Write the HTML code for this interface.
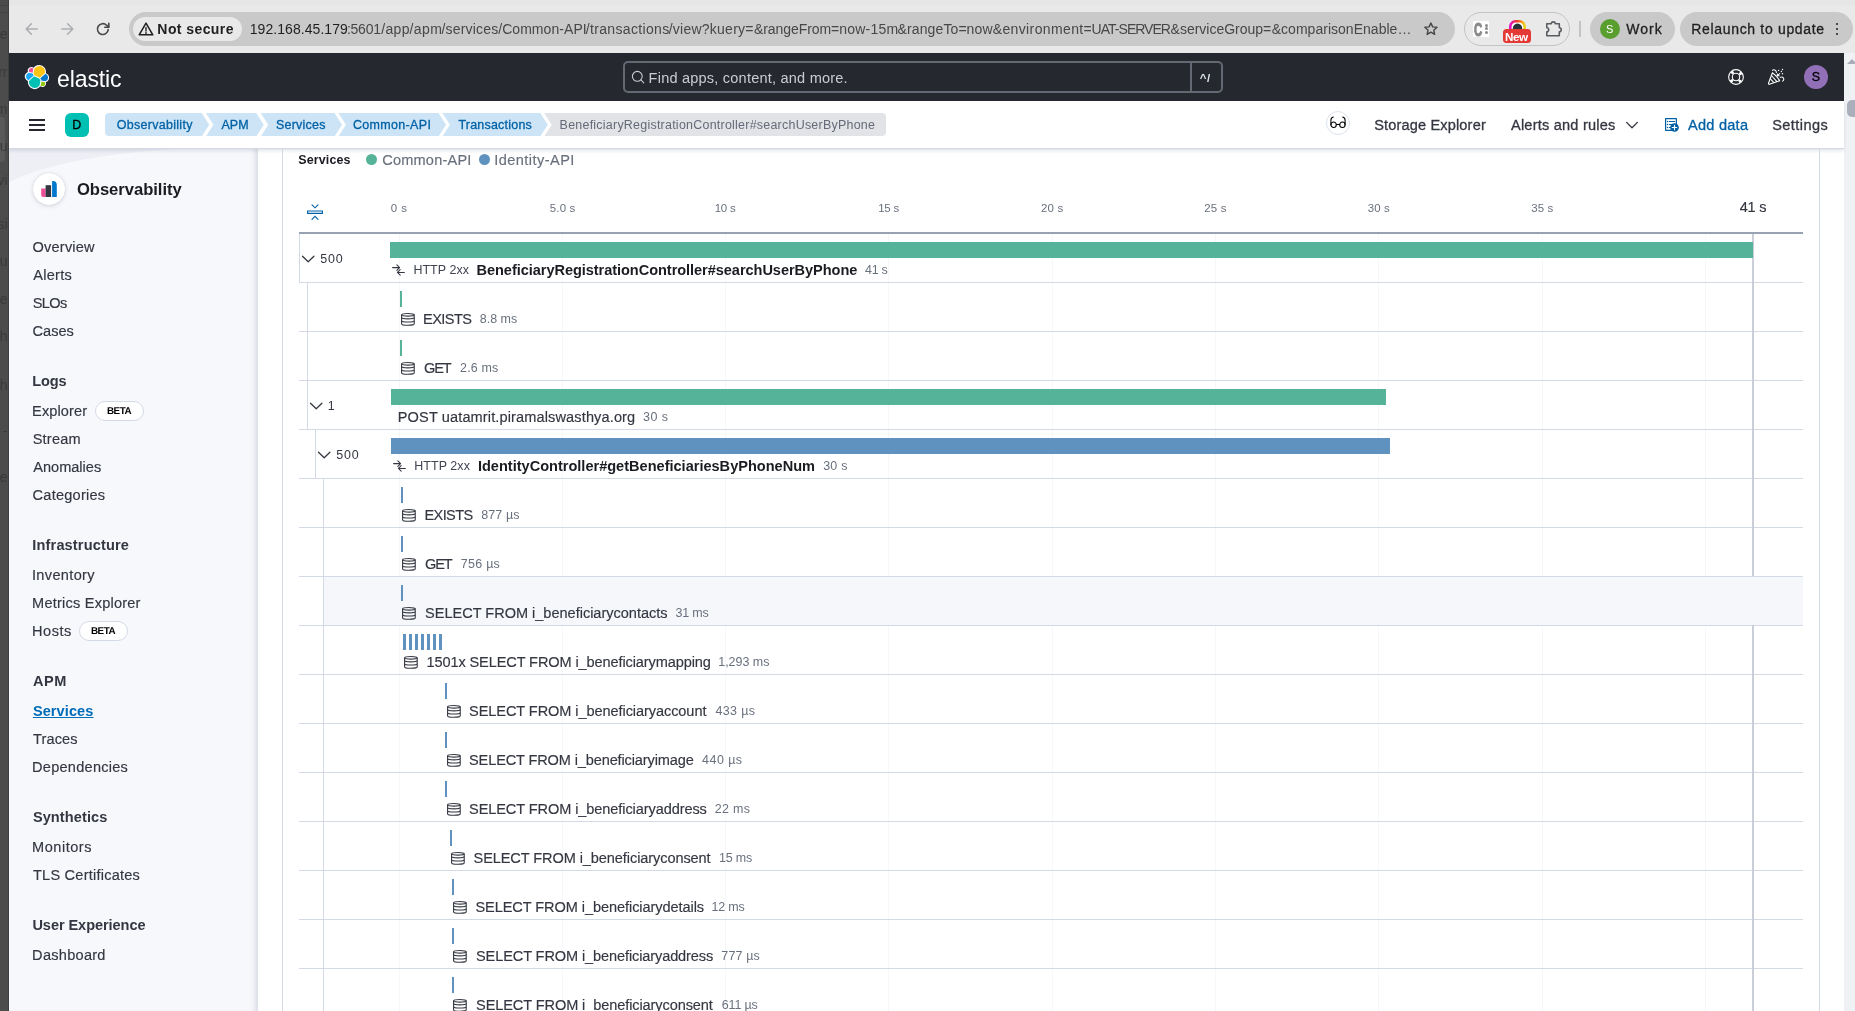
<!DOCTYPE html>
<html lang="en">
<head>
<meta charset="utf-8">
<title>BeneficiaryRegistrationController#searchUserByPhone - Transactions - Common-API - Services - APM - Observability - Elastic</title>
<style>
html,body{margin:0;padding:0;}
body{width:1855px;height:1011px;overflow:hidden;position:relative;background:#fff;font-family:"Liberation Sans", sans-serif;}
#app{position:absolute;left:0;top:0;width:1855px;height:1011px;overflow:hidden;will-change:transform;}
#app div,#app span,#app svg,#app a{position:absolute;white-space:nowrap;box-sizing:border-box;}
#app span{display:block;}
#app svg{overflow:visible;}

.u{text-decoration:underline;text-decoration-thickness:1px;text-underline-offset:1px;}
.crumb{height:23.4px;top:113px;background:#CCE4F5;}
.hl{background:#D3DAE6;height:1px;left:299px;width:1504px;}
.vl{background:#D3DAE6;width:1px;}
.gl{background:#F6F7FA;width:1px;top:234px;height:777px;}
.beta{height:20px;border:1px solid #D3DAE6;border-radius:10px;background:#fff;}

</style>
</head>
<body>
<div id="app">
<div style="left:0px;top:0px;width:1855px;height:53px;background:#E9E9E9;"></div>
<div style="left:0px;top:0px;width:1855px;height:5px;background:#E6E6E6;"></div>
<div style="left:129px;top:12px;width:1326px;height:34px;background:#C9C9C9;border-radius:17px;"></div>
<div style="left:133px;top:17px;width:109px;height:24px;background:#E9E9E9;border-radius:12px;"></div>
<svg style="left:24px;top:21px" width="16" height="16" viewBox="0 0 16 16" fill="none" stroke="#ADAEB1" stroke-width="1.6" stroke-linecap="round" stroke-linejoin="round"><path d="M13.2 8H2.4M7.4 2.8 2.2 8l5.2 5.2"/></svg>
<svg style="left:59px;top:21px" width="16" height="16" viewBox="0 0 16 16" fill="none" stroke="#ADAEB1" stroke-width="1.6" stroke-linecap="round" stroke-linejoin="round"><path d="M2.8 8h10.8M8.6 2.8 13.8 8l-5.2 5.2"/></svg>
<svg style="left:95px;top:21px" width="16" height="16" viewBox="0 0 16 16" fill="none" stroke="#474747" stroke-width="1.6" stroke-linecap="round" stroke-linejoin="round"><path d="M13.2 8.6A5.4 5.4 0 1 1 11.6 4.2L13.6 6"/><path d="M13.8 2.2V6.2H9.8" /></svg>
<svg style="left:138px;top:22px" width="16" height="14" viewBox="0 0 16 14" fill="none" stroke="#1F1F1F" stroke-width="1.5" stroke-linejoin="round"><path d="M8 1.2 14.8 12.8H1.2Z"/><path d="M8 5.4v3.6M8 10.4v1" stroke-linecap="round" stroke-width="1.3"/></svg>
<span style="left:157.36px;top:22.02px;font-size:14px;line-height:14px;color:#1F1F1F;font-weight:700;letter-spacing:0.417px;">Not secure</span>
<span style="left:249.73px;top:22.02px;font-size:14px;line-height:14px;color:#1F1F1F;letter-spacing:0.063px;">192.168.45.179</span>
<span style="left:346.92px;top:22.02px;font-size:14px;line-height:14px;color:#474747;letter-spacing:-0.243px;">:5601</span>
<span style="left:381.2px;top:22.02px;font-size:14px;line-height:14px;color:#474747;letter-spacing:0.347px;">/app</span>
<span style="left:409.4px;top:22.02px;font-size:14px;line-height:14px;color:#474747;letter-spacing:0.433px;">/apm</span>
<span style="left:441.4px;top:22.02px;font-size:14px;line-height:14px;color:#474747;letter-spacing:0.196px;">/services</span>
<span style="left:498.2px;top:22.02px;font-size:14px;line-height:14px;color:#474747;letter-spacing:0.058px;">/Common-API</span>
<span style="left:585.7px;top:22.02px;font-size:14px;line-height:14px;color:#474747;letter-spacing:0.344px;">/transactions</span>
<span style="left:668.7px;top:22.02px;font-size:14px;line-height:14px;color:#474747;letter-spacing:0.245px;">/view?kuery=</span>
<span style="left:754.01px;top:22.02px;font-size:14px;line-height:14px;color:#474747;letter-spacing:-0.07px;">&amp;rangeFrom=</span>
<span style="left:839.27px;top:22.02px;font-size:14px;line-height:14px;color:#474747;letter-spacing:0.212px;">now-15m</span>
<span style="left:897.51px;top:22.02px;font-size:14px;line-height:14px;color:#474747;letter-spacing:0.122px;">&amp;rangeTo=</span>
<span style="left:966.57px;top:22.02px;font-size:14px;line-height:14px;color:#474747;letter-spacing:0.156px;">now</span>
<span style="left:992.71px;top:22.02px;font-size:14px;line-height:14px;color:#474747;letter-spacing:0.377px;">&amp;environment=</span>
<span style="left:1091.62px;top:22.02px;font-size:14px;line-height:14px;color:#474747;letter-spacing:-0.982px;">UAT-SERVER</span>
<span style="left:1170.61px;top:22.02px;font-size:14px;line-height:14px;color:#474747;letter-spacing:-0.007px;">&amp;serviceGroup=</span>
<span style="left:1271.71px;top:22.02px;font-size:14px;line-height:14px;color:#474747;letter-spacing:0.023px;">&amp;comparisonEnable…</span>
<svg style="left:1423.200px;top:21.400px" width="15.800" height="15.800" viewBox="0 0 18 18" fill="none" stroke="#474747" stroke-width="1.650" stroke-linejoin="round"><path d="M9 2.2l2.05 4.5 4.85.5-3.65 3.25 1.05 4.8L9 12.75l-4.3 2.5 1.05-4.8L2.1 7.2l4.85-.5z"/></svg>
<div style="left:1464px;top:12px;width:106px;height:34px;background:transparent;border:1px solid #C3C3C3;border-radius:17px;"></div>
<div style="left:1473px;top:21px;width:16px;height:15.7px;background:#FFFFFF;"></div>
<span style="left:1473.93px;top:20.02px;font-size:19px;line-height:19px;color:#8A8A8A;font-weight:700;transform:scaleX(0.6);transform-origin:0 0;-webkit-text-stroke:1.1px #8A8A8A;">C</span>
<div style="left:1484.6px;top:23.7px;width:3px;height:3px;background:#8A8A8A;border-radius:2px;"></div>
<div style="left:1484.6px;top:27.2px;width:3px;height:3px;background:#8A8A8A;border-radius:2px;"></div>
<div style="left:1484.6px;top:30.7px;width:3px;height:3px;background:#8A8A8A;border-radius:2px;"></div>
<svg style="left:1508.500px;top:20.400px" width="17" height="9" viewBox="0 0 17 9"><defs><linearGradient id="rb" x1="0" y1="0" x2="1" y2="0"><stop offset="0" stop-color="#E411C7"/><stop offset=".45" stop-color="#F0342C"/><stop offset=".8" stop-color="#F59A12"/><stop offset="1" stop-color="#E9D21A"/></linearGradient></defs><path d="M1.300 9V6.500a5.200 5.200 0 0 1 5.200-5.200h4a5.200 5.200 0 0 1 5.200 5.200V9" fill="#fff" stroke="url(#rb)" stroke-width="2.600"/><path d="M3.700 9a4.800 5.600 0 0 1 9.600 0z" fill="#263238"/></svg>
<div style="left:1503px;top:28.7px;width:28.2px;height:14.3px;background:#E53935;border-radius:3.5px;"></div>
<span style="left:1505.12px;top:31.02px;font-size:11.7px;line-height:11.7px;color:#FFFFFF;font-weight:700;letter-spacing:-0.586px;">New</span>
<svg style="left:1545px;top:19.500px" width="18" height="17" viewBox="0 0 18 17" fill="none" stroke="#5A5E63" stroke-width="1.600" stroke-linejoin="round"><path d="M1.800 3.800H6.300C6.300 1.200 10.300 1.200 10.300 3.800H14.300V7.800C16.900 7.800 16.900 11.800 14.300 11.800V15.700H1.800V11.800C4.300 11.800 4.300 7.800 1.800 7.800Z"/></svg>
<div style="left:1579.2px;top:21px;width:1.6px;height:15.7px;background:#C4C4C4;"></div>
<div style="left:1590px;top:12px;width:85px;height:34px;background:#C9C9C9;border-radius:17px;"></div>
<div style="left:1600px;top:19px;width:20px;height:20px;background:#5B9E30;border-radius:10px;"></div>
<span style="left:1606.1px;top:24.02px;font-size:11px;line-height:11px;color:#FFFFFF;">S</span>
<span style="left:1626.34px;top:22.02px;font-size:14px;line-height:14px;color:#1F1F1F;-webkit-text-stroke:0.3px;letter-spacing:0.977px;">Work</span>
<div style="left:1680px;top:12px;width:172.5px;height:34px;background:#C9C9C9;border-radius:17px;"></div>
<span style="left:1691.25px;top:22.02px;font-size:14px;line-height:14px;color:#1F1F1F;-webkit-text-stroke:0.3px;letter-spacing:0.673px;">Relaunch to update</span>
<div style="left:1835.6px;top:22.6px;width:2.8px;height:2.8px;background:#1F1F1F;border-radius:2px;"></div>
<div style="left:1835.6px;top:27.6px;width:2.8px;height:2.8px;background:#1F1F1F;border-radius:2px;"></div>
<div style="left:1835.6px;top:32.6px;width:2.8px;height:2.8px;background:#1F1F1F;border-radius:2px;"></div>
<div style="left:1844px;top:53px;width:11px;height:958px;background:#F0F1F5;"></div>
<svg style="left:1847px;top:59px" width="8" height="5" viewBox="0 0 8 5"><path d="M0 5 5 0l3 3v2z" fill="#A9ADB9"/></svg>
<div style="left:1847px;top:100px;width:12px;height:16.8px;background:#ABAFBB;border-radius:5px;"></div>
<div style="left:9px;top:53px;width:1835px;height:47.6px;background:#25282F;"></div>
<svg style="left:25px;top:65px" width="24" height="24" viewBox="0 0 32 32"><g fill="none" fill-rule="evenodd">
<path fill="#FFF" d="M32 16.77a6.334 6.334 0 00-1.14-3.63 6.298 6.298 0 00-3.02-2.3 8.978 8.978 0 00.16-1.7 9.107 9.107 0 00-1.74-5.37 9.122 9.122 0 00-10.18-3.32 9.166 9.166 0 00-4.57 3.34 4.862 4.862 0 00-5.94-.04 4.856 4.856 0 00-1.64 5.7 6.408 6.408 0 00-3.03 2.31 6.393 6.393 0 00.01 7.32 6.353 6.353 0 003.04 2.29 9.04 9.04 0 00-.16 1.7 9.08 9.08 0 001.74 5.36 9.1 9.1 0 0010.17 3.31 9.129 9.129 0 004.57-3.33 4.812 4.812 0 002.96 1.02 4.858 4.858 0 004.62-6.37 6.413 6.413 0 003.03-2.31 6.348 6.348 0 001.17-3.69"/>
<path fill="#FEC514" d="M12.58 13.787l7.002 3.211 7.066-6.213a7.849 7.849 0 00.152-1.557c0-4.287-3.472-7.775-7.74-7.775a7.723 7.723 0 00-6.386 3.38l-1.178 6.12 1.084 2.834z"/>
<path fill="#00BFB3" d="M5.373 21.223a7.99 7.99 0 00-.15 1.581c0 4.299 3.484 7.796 7.766 7.796a7.746 7.746 0 006.411-3.401l1.166-6.102-1.557-2.988-7.029-3.217-6.607 6.331z"/>
<path fill="#F04E98" d="M5.33 9.057l4.798 1.138 1.052-5.478a3.79 3.79 0 00-6.07 3.024c0 .452.08.903.237 1.316"/>
<path fill="#1BA9F5" d="M4.913 10.204a5.378 5.378 0 00-3.613 5.058 5.326 5.326 0 003.433 4.993l6.733-6.111-1.236-2.651-5.317-1.289z"/>
<path fill="#93C90E" d="M20.91 27.283a3.763 3.763 0 002.306.794 3.797 3.797 0 003.783-3.801 3.78 3.78 0 00-.236-1.316l-4.794-1.126-1.059 5.449z"/>
<path fill="#07C" d="M21.886 20.57l5.28 1.239a5.403 5.403 0 003.613-5.062 5.33 5.33 0 00-3.442-4.986l-6.904 6.07 1.453 2.739z"/>
</g></svg>
<span style="left:56.92px;top:67.02px;font-size:24.5px;line-height:24.5px;color:#FFFFFF;letter-spacing:-0.123px;transform:scaleX(0.94);transform-origin:0 0;">elastic</span>
<div style="left:623px;top:61px;width:600px;height:32px;background:transparent;border:2px solid #646873;border-radius:5px;"></div>
<div style="left:1190px;top:63px;width:1.5px;height:28px;background:#646873;"></div>
<svg style="left:631px;top:70px" width="14" height="14" viewBox="0 0 14 14" fill="none" stroke="#C9CCD4" stroke-width="1.1" stroke-linecap="round"><circle cx="6.3" cy="6.3" r="4.9"/><path d="M9.9 9.9l2.9 2.9"/></svg>
<span style="left:648.61px;top:71.02px;font-size:14.56px;line-height:14.56px;color:#C9CCD4;letter-spacing:0.206px;">Find apps, content, and more.</span>
<span style="left:1199.75px;top:73.02px;font-size:11.44px;line-height:11.44px;color:#DFE5EF;font-weight:700;">^</span>
<span style="left:1206.89px;top:73.02px;font-size:11.44px;line-height:11.44px;color:#DFE5EF;font-weight:700;">/</span>
<svg style="left:1728px;top:69px" width="16" height="16" viewBox="0 0 16 16" fill="none" stroke="#FFFFFF" stroke-width="1.100"><circle cx="8" cy="8" r="7.350"/><circle cx="8" cy="8" r="3.700"/><circle cx="8" cy="8" r="5.550" stroke-width="2.900" stroke-dasharray="2.500 6.218" stroke-dashoffset="-3.109"/></svg>
<svg style="left:1768px;top:69px" width="16" height="16" viewBox="0 0 16 16" fill="none" stroke="#FFFFFF" stroke-width="1.050" stroke-linejoin="round" stroke-linecap="round"><path d="M4.400 3.700 0.500 14.300c-.2.600.3 1.100.9.900L11.700 11.800C10 8.600 7.600 5.900 4.400 3.700z"/><path d="M2.200 9.700 5.600 13.300M3.400 6.500 8.700 12.400"/><path d="M4.400 1.200C6.300.200 8.600 1.500 8.400 3.700"/><path d="M11.700 4.500 9.400 6.800M9.400 5v1.800h1.800"/><path d="M12.300 8.400c1.500-.9 3.500-.1 3.500 1.600 0 .9-.5 1.600-1.200 2.100"/><path d="M10.600 1.300v.100M14.500.500v.100M13.400 2.500v.100M14.500 4.600v.100" stroke-width="1.350"/></svg>
<div style="left:1804px;top:65px;width:24px;height:24px;background:#9170B8;border-radius:12px;"></div>
<span style="left:1811.63px;top:71.02px;font-size:12.48px;line-height:12.48px;color:#000000;-webkit-text-stroke:0.3px;">S</span>
<div style="left:9px;top:140px;width:249px;height:871px;background:#F7F8FC;box-shadow:inset -7px 0 6px -5px rgba(152,162,179,.40);"></div>
<svg style="left:9px;top:149px" width="170" height="36" viewBox="0 0 170 36"><path d="M0 0h166C100 4 40 14 0 33z" fill="#EDEFF5"/></svg>
<div style="left:9px;top:100.6px;width:1835px;height:48.4px;background:#FFFFFF;border-bottom:1px solid #D3DAE6;box-shadow:0 2px 3px rgba(152,162,179,.28);"></div>
<div style="left:29px;top:119px;width:16px;height:2px;background:#25262E;"></div>
<div style="left:29px;top:124px;width:16px;height:2px;background:#25262E;"></div>
<div style="left:29px;top:129px;width:16px;height:2px;background:#25262E;"></div>
<div style="left:65px;top:113px;width:24px;height:24px;background:#00BFB3;border-radius:6px;"></div>
<span style="left:72.18px;top:119.02px;font-size:12.48px;line-height:12.48px;color:#000000;-webkit-text-stroke:0.3px;">D</span>
<div class="crumb" style="left:105px;width:104.2px;clip-path:polygon(0 0,96.7px 0,104.2px 50%,96.7px 100%,0 100%);border-radius:4px 0 0 4px;"></div>
<span style="left:116.71px;top:119.02px;font-size:12.48px;line-height:12.48px;color:#0061A6;-webkit-text-stroke:0.3px;letter-spacing:0.304px;">Observability</span>
<div class="crumb" style="left:205.9px;width:57.8px;clip-path:polygon(0 0,50.3px 0,57.8px 50%,50.3px 100%,0 100%,7.5px 50%);"></div>
<span style="left:221.48px;top:119.02px;font-size:12.48px;line-height:12.48px;color:#0061A6;-webkit-text-stroke:0.3px;letter-spacing:0.014px;">APM</span>
<div class="crumb" style="left:260.8px;width:81.2px;clip-path:polygon(0 0,73.7px 0,81.2px 50%,73.7px 100%,0 100%,7.5px 50%);"></div>
<span style="left:275.93px;top:119.02px;font-size:12.48px;line-height:12.48px;color:#0061A6;-webkit-text-stroke:0.3px;letter-spacing:0.244px;">Services</span>
<div class="crumb" style="left:338.4px;width:107.6px;clip-path:polygon(0 0,100.1px 0,107.6px 50%,100.1px 100%,0 100%,7.5px 50%);"></div>
<span style="left:352.97px;top:119.02px;font-size:12.48px;line-height:12.48px;color:#0061A6;-webkit-text-stroke:0.3px;letter-spacing:0.339px;">Common-API</span>
<div class="crumb" style="left:442.4px;width:105.4px;clip-path:polygon(0 0,97.9px 0,105.4px 50%,97.9px 100%,0 100%,7.5px 50%);"></div>
<span style="left:458.42px;top:119.02px;font-size:12.48px;line-height:12.48px;color:#0061A6;-webkit-text-stroke:0.3px;letter-spacing:0.229px;">Transactions</span>
<div class="crumb" style="left:544.2px;width:342.1px;clip-path:polygon(0 0,342.1px 0,342.1px 100%,0 100%,7.5px 50%);border-radius:0 4px 4px 0;background:#E2E3E7;"></div>
<span style="left:559.58px;top:119.02px;font-size:12.48px;line-height:12.48px;color:#646A77;letter-spacing:0.236px;">BeneficiaryRegistrationController#searchUserByPhone</span>
<div style="left:1326px;top:111px;width:24px;height:24px;background:#FFFFFF;border:1px solid #DCE2EC;border-radius:12px;"></div>
<svg style="left:1330px;top:116px" width="16" height="13" viewBox="0 0 16 13" fill="none" stroke="#000" stroke-width="1.050" stroke-linecap="round"><circle cx="3.600" cy="8.700" r="2.700"/><circle cx="12.400" cy="8.700" r="2.700"/><path d="M6.300 8.500h3.400M0.900 8.700V4.400C0.900 2.500 1.900 1.400 3.300 1.100M15.100 8.700V4.400C15.100 2.500 14.100 1.400 12.700 1.100"/></svg>
<span style="left:1374.14px;top:118.02px;font-size:14.56px;line-height:14.56px;color:#343741;-webkit-text-stroke:0.3px;letter-spacing:0.163px;">Storage Explorer</span>
<span style="left:1510.97px;top:118.02px;font-size:14.56px;line-height:14.56px;color:#343741;-webkit-text-stroke:0.3px;letter-spacing:0.219px;">Alerts and rules</span>
<svg style="left:1625px;top:120px" width="14" height="10" viewBox="0 0 14 10" fill="none" stroke="#343741" stroke-width="1.3" stroke-linecap="round" stroke-linejoin="round"><path d="M1.600 2.400 7 7.800l5.400-5.400"/></svg>
<svg style="left:1664px;top:117px" width="16" height="16" viewBox="0 0 16 16" fill="none" stroke="#0061A6" stroke-width="1.200" stroke-linejoin="round"><path d="M1.600 1.600h10.800v11.700H1.600z"/><path d="M5.300 4.500h5.400M5.300 7.500h3M5.300 10.500h2" stroke-linecap="round"/><circle cx="3.500" cy="4.500" r=".700" fill="#0061A6" stroke="none"/><circle cx="3.500" cy="7.500" r=".700" fill="#0061A6" stroke="none"/><circle cx="3.500" cy="10.500" r=".700" fill="#0061A6" stroke="none"/><circle cx="10.500" cy="10.500" r="4.350" fill="#0061A6" stroke="none"/><path d="M10.500 8.200v4.600M8.200 10.500h4.600" stroke="#fff" stroke-width="1.100" stroke-linecap="round"/></svg>
<span style="left:1688.07px;top:118.02px;font-size:14.56px;line-height:14.56px;color:#0061A6;-webkit-text-stroke:0.3px;letter-spacing:0.242px;">Add data</span>
<span style="left:1772.14px;top:118.02px;font-size:14.56px;line-height:14.56px;color:#343741;-webkit-text-stroke:0.3px;letter-spacing:0.432px;">Settings</span>
<div style="left:33px;top:173px;width:32px;height:32px;background:#FFFFFF;border-radius:16px;box-shadow:0 1px 4px rgba(105,112,125,.25),0 0 1px rgba(105,112,125,.3);"></div>
<svg style="left:41px;top:181px" width="16" height="16" viewBox="0 0 16 16"><path d="M0.200 7.600h4.400V16H2.200a2 2 0 0 1-2-2z" fill="#F04E98"/><path d="M4.600 4.200h5.500V16H4.600z" fill="#343741"/><path d="M11.100 0h.7a4 4 0 0 1 4 4v12h-4.700z" fill="#0077CC"/></svg>
<span style="left:76.92px;top:182.02px;font-size:16.64px;line-height:16.64px;color:#1A1C21;font-weight:700;letter-spacing:-0.039px;">Observability</span>
<span style="left:32.61px;top:240.02px;font-size:14.56px;line-height:14.56px;color:#343741;-webkit-text-stroke:0.16px;letter-spacing:0.19px;">Overview</span>
<span style="left:33.27px;top:268.02px;font-size:14.56px;line-height:14.56px;color:#343741;-webkit-text-stroke:0.16px;letter-spacing:0.274px;">Alerts</span>
<span style="left:32.64px;top:296.02px;font-size:14.56px;line-height:14.56px;color:#343741;-webkit-text-stroke:0.16px;letter-spacing:-0.565px;">SLOs</span>
<span style="left:32.56px;top:324.02px;font-size:14.56px;line-height:14.56px;color:#343741;-webkit-text-stroke:0.16px;letter-spacing:0.008px;">Cases</span>
<span style="left:32.33px;top:374.02px;font-size:14.56px;line-height:14.56px;color:#343741;font-weight:700;letter-spacing:-0.159px;">Logs</span>
<span style="left:32.11px;top:404.02px;font-size:14.56px;line-height:14.56px;color:#343741;-webkit-text-stroke:0.16px;letter-spacing:0.11px;">Explorer</span>
<div class="beta" style="left:95px;top:401px;width:48.5px"></div>
<span style="left:106.94px;top:406.02px;font-size:9.88px;line-height:9.88px;color:#000000;font-weight:700;letter-spacing:-0.509px;transform:rotate(0.03deg);">BETA</span>
<span style="left:32.64px;top:432.02px;font-size:14.56px;line-height:14.56px;color:#343741;-webkit-text-stroke:0.16px;letter-spacing:0.227px;">Stream</span>
<span style="left:33.27px;top:460.02px;font-size:14.56px;line-height:14.56px;color:#343741;-webkit-text-stroke:0.16px;">Anomalies</span>
<span style="left:32.56px;top:488.02px;font-size:14.56px;line-height:14.56px;color:#343741;-webkit-text-stroke:0.16px;letter-spacing:0.246px;">Categories</span>
<span style="left:32.33px;top:538.02px;font-size:14.56px;line-height:14.56px;color:#343741;font-weight:700;letter-spacing:0.154px;">Infrastructure</span>
<span style="left:31.96px;top:568.02px;font-size:14.56px;line-height:14.56px;color:#343741;-webkit-text-stroke:0.16px;letter-spacing:0.342px;">Inventory</span>
<span style="left:32.11px;top:596.02px;font-size:14.56px;line-height:14.56px;color:#343741;-webkit-text-stroke:0.16px;letter-spacing:0.217px;">Metrics Explorer</span>
<span style="left:32.11px;top:624.02px;font-size:14.56px;line-height:14.56px;color:#343741;-webkit-text-stroke:0.16px;letter-spacing:0.509px;">Hosts</span>
<div class="beta" style="left:79px;top:621px;width:48.5px"></div>
<span style="left:90.94px;top:626.02px;font-size:9.88px;line-height:9.88px;color:#000000;font-weight:700;letter-spacing:-0.509px;transform:rotate(0.03deg);">BETA</span>
<span style="left:32.94px;top:674.02px;font-size:14.56px;line-height:14.56px;color:#343741;font-weight:700;letter-spacing:0.505px;">APM</span>
<span class="u" style="left:32.88px;top:704.02px;font-size:14.56px;line-height:14.56px;color:#006BB8;font-weight:700;letter-spacing:0.094px;">Services</span>
<span style="left:32.97px;top:732.02px;font-size:14.56px;line-height:14.56px;color:#343741;-webkit-text-stroke:0.16px;letter-spacing:0.127px;">Traces</span>
<span style="left:32.11px;top:760.02px;font-size:14.56px;line-height:14.56px;color:#343741;-webkit-text-stroke:0.16px;letter-spacing:0.247px;">Dependencies</span>
<span style="left:32.88px;top:810.02px;font-size:14.56px;line-height:14.56px;color:#343741;font-weight:700;letter-spacing:0.095px;">Synthetics</span>
<span style="left:32.11px;top:840.02px;font-size:14.56px;line-height:14.56px;color:#343741;-webkit-text-stroke:0.16px;letter-spacing:0.506px;">Monitors</span>
<span style="left:32.97px;top:868.02px;font-size:14.56px;line-height:14.56px;color:#343741;-webkit-text-stroke:0.16px;letter-spacing:0.225px;">TLS Certificates</span>
<span style="left:32.43px;top:918.02px;font-size:14.56px;line-height:14.56px;color:#343741;font-weight:700;letter-spacing:-0.067px;">User Experience</span>
<span style="left:32.11px;top:948.02px;font-size:14.56px;line-height:14.56px;color:#343741;-webkit-text-stroke:0.16px;letter-spacing:0.271px;">Dashboard</span>
<div style="left:282px;top:149px;width:1px;height:862px;background:#D3DAE6;"></div>
<div style="left:1819px;top:149px;width:1px;height:862px;background:#D3DAE6;"></div>
<span style="left:298.34px;top:154.02px;font-size:12.48px;line-height:12.48px;color:#1A1C21;font-weight:700;letter-spacing:0.109px;">Services</span>
<div style="left:366px;top:154px;width:11px;height:11px;background:#54B399;border-radius:6px;"></div>
<span style="left:382.26px;top:153.02px;font-size:14.56px;line-height:14.56px;color:#69707D;-webkit-text-stroke:0.16px;letter-spacing:0.198px;">Common-API</span>
<div style="left:479px;top:154px;width:11px;height:11px;background:#6092C0;border-radius:6px;"></div>
<span style="left:494.26px;top:153.02px;font-size:14.56px;line-height:14.56px;color:#69707D;-webkit-text-stroke:0.16px;letter-spacing:0.445px;">Identity-API</span>
<svg style="left:307px;top:204px" width="16" height="16" viewBox="0 0 16 16" fill="none" stroke="#0061A6" stroke-width="1.1" stroke-linejoin="miter"><path d="M0.600 7h14.800v2.400H0.600z"/><path d="M5 0.800 8 3.800l3-3M5 15.400l3-3 3 3" stroke-linecap="round"/></svg>
<div class="gl" style="left:399px"></div>
<div class="gl" style="left:562px"></div>
<div class="gl" style="left:725px"></div>
<div class="gl" style="left:888px"></div>
<div class="gl" style="left:1052px"></div>
<div class="gl" style="left:1215px"></div>
<div class="gl" style="left:1378px"></div>
<div class="gl" style="left:1542px"></div>
<div class="gl" style="left:1705px"></div>
<span style="left:390.75px;top:203.02px;font-size:11.44px;line-height:11.44px;color:#69707D;letter-spacing:0.501px;">0 s</span>
<span style="left:549.84px;top:203.02px;font-size:11.44px;line-height:11.44px;color:#69707D;letter-spacing:0.169px;">5.0 s</span>
<span style="left:714.73px;top:203.02px;font-size:11.44px;line-height:11.44px;color:#69707D;letter-spacing:-0.245px;">10 s</span>
<span style="left:878.13px;top:203.02px;font-size:11.44px;line-height:11.44px;color:#69707D;letter-spacing:-0.178px;">15 s</span>
<span style="left:1040.92px;top:203.02px;font-size:11.44px;line-height:11.44px;color:#69707D;letter-spacing:0.223px;">20 s</span>
<span style="left:1204.22px;top:203.02px;font-size:11.44px;line-height:11.44px;color:#69707D;letter-spacing:0.19px;">25 s</span>
<span style="left:1367.76px;top:203.02px;font-size:11.44px;line-height:11.44px;color:#69707D;letter-spacing:0.144px;">30 s</span>
<span style="left:1531.26px;top:203.02px;font-size:11.44px;line-height:11.44px;color:#69707D;letter-spacing:0.077px;">35 s</span>
<span style="left:1739.67px;top:200.02px;font-size:14.56px;line-height:14.56px;color:#343741;-webkit-text-stroke:0.16px;letter-spacing:-0.212px;">41 s</span>
<div style="left:299px;top:232px;width:1504px;height:2px;background:#98A2B3;"></div>
<div style="left:324px;top:577px;width:1479px;height:48px;background:#F5F7FA;"></div>
<div class="hl" style="top:282px"></div>
<div class="hl" style="top:331px"></div>
<div class="hl" style="top:380px"></div>
<div class="hl" style="top:429px"></div>
<div class="hl" style="top:478px"></div>
<div class="hl" style="top:527px"></div>
<div class="hl" style="top:576px"></div>
<div class="hl" style="top:625px"></div>
<div class="hl" style="top:674px"></div>
<div class="hl" style="top:723px"></div>
<div class="hl" style="top:772px"></div>
<div class="hl" style="top:821px"></div>
<div class="hl" style="top:870px"></div>
<div class="hl" style="top:919px"></div>
<div class="hl" style="top:968px"></div>
<div class="hl" style="top:1017px"></div>
<div class="vl" style="left:299px;top:234px;height:49px"></div>
<div class="vl" style="left:307px;top:282px;height:147px"></div>
<div class="vl" style="left:315px;top:429px;height:49px"></div>
<div class="vl" style="left:323px;top:478px;height:539px"></div>
<div style="left:1752px;top:234px;width:2px;height:342px;background:#C9CED9;"></div>
<div style="left:1752px;top:625px;width:2px;height:386px;background:#C9CED9;"></div>
<div style="left:390px;top:242px;width:1363px;height:16px;background:#54B399;"></div>
<svg style="left:302px;top:255px" width="13" height="8" viewBox="0 0 13 8" fill="none" stroke="#343741" stroke-width="1.3" stroke-linecap="round" stroke-linejoin="round"><path d="M0.500 1.300 6.200 6.700 11.900 1.300"/></svg>
<span style="left:320.3px;top:253.02px;font-size:12.48px;line-height:12.48px;color:#343741;letter-spacing:0.742px;">500</span>
<svg style="left:392px;top:264px" width="13" height="12" viewBox="0 0 13 12" fill="none" stroke="#343741" stroke-width="1.05" stroke-linecap="round" stroke-linejoin="round"><path d="M0.600 3.600h6.600M4.800 0.800 7.600 3.600 4.800 6.400"/><path d="M12.400 8.400H5.800M8.200 5.600 5.400 8.400l2.800 2.800"/></svg>
<span style="left:413.38px;top:264.02px;font-size:12.48px;line-height:12.48px;color:#404452;letter-spacing:0.062px;">HTTP 2xx</span>
<span style="left:476.53px;top:263.02px;font-size:14.56px;line-height:14.56px;color:#1A1C21;font-weight:700;letter-spacing:-0.048px;">BeneficiaryRegistrationController#searchUserByPhone</span>
<span style="left:864.91px;top:264.02px;font-size:12.48px;line-height:12.48px;color:#69707D;letter-spacing:-0.21px;">41 s</span>
<div style="left:400px;top:291px;width:2.2px;height:16px;background:#54B399;"></div>
<svg style="left:400.79999999999995px;top:313px" width="14" height="13" viewBox="0 0 14 13" fill="none" stroke="#343741" stroke-width="1.1"><ellipse cx="6.900" cy="1.850" rx="6.300" ry="1.300"/><path d="M0.600 1.850v9.050a6.300 1.300 0 0 0 12.600 0V1.850"/><path d="M0.600 4.600a6.300 1.300 0 0 0 12.600 0M0.600 7.750a6.300 1.300 0 0 0 12.600 0"/></svg>
<span style="left:423.01px;top:312.02px;font-size:14.56px;line-height:14.56px;color:#343741;-webkit-text-stroke:0.16px;letter-spacing:-0.555px;">EXISTS</span>
<span style="left:479.76px;top:313.02px;font-size:12.48px;line-height:12.48px;color:#69707D;letter-spacing:0.015px;">8.8 ms</span>
<div style="left:400px;top:340px;width:2.2px;height:16px;background:#54B399;"></div>
<svg style="left:400.79999999999995px;top:362px" width="14" height="13" viewBox="0 0 14 13" fill="none" stroke="#343741" stroke-width="1.1"><ellipse cx="6.900" cy="1.850" rx="6.300" ry="1.300"/><path d="M0.600 1.850v9.050a6.300 1.300 0 0 0 12.600 0V1.850"/><path d="M0.600 4.600a6.300 1.300 0 0 0 12.600 0M0.600 7.750a6.300 1.300 0 0 0 12.600 0"/></svg>
<span style="left:424.07px;top:361.02px;font-size:14.56px;line-height:14.56px;color:#343741;-webkit-text-stroke:0.16px;letter-spacing:-1.119px;">GET</span>
<span style="left:460.07px;top:362.02px;font-size:12.48px;line-height:12.48px;color:#69707D;letter-spacing:0.132px;">2.6 ms</span>
<div style="left:391px;top:389px;width:995px;height:16px;background:#54B399;"></div>
<svg style="left:310px;top:402px" width="13" height="8" viewBox="0 0 13 8" fill="none" stroke="#343741" stroke-width="1.3" stroke-linecap="round" stroke-linejoin="round"><path d="M0.500 1.300 6.200 6.700 11.900 1.300"/></svg>
<span style="left:327.85px;top:400.02px;font-size:12.48px;line-height:12.48px;color:#343741;">1</span>
<span style="left:397.81px;top:410.02px;font-size:14.56px;line-height:14.56px;color:#343741;-webkit-text-stroke:0.16px;letter-spacing:0.125px;">POST uatamrit.piramalswasthya.org</span>
<span style="left:643.02px;top:411.02px;font-size:12.48px;line-height:12.48px;color:#69707D;letter-spacing:0.486px;">30 s</span>
<div style="left:391px;top:438px;width:999px;height:16px;background:#6092C0;"></div>
<svg style="left:318px;top:451px" width="13" height="8" viewBox="0 0 13 8" fill="none" stroke="#343741" stroke-width="1.3" stroke-linecap="round" stroke-linejoin="round"><path d="M0.500 1.300 6.200 6.700 11.900 1.300"/></svg>
<span style="left:336.3px;top:449.02px;font-size:12.48px;line-height:12.48px;color:#343741;letter-spacing:0.742px;">500</span>
<svg style="left:393px;top:460px" width="13" height="12" viewBox="0 0 13 12" fill="none" stroke="#343741" stroke-width="1.05" stroke-linecap="round" stroke-linejoin="round"><path d="M0.600 3.600h6.600M4.800 0.800 7.600 3.600 4.800 6.400"/><path d="M12.400 8.400H5.800M8.200 5.600 5.400 8.400l2.800 2.800"/></svg>
<span style="left:414.28px;top:460.02px;font-size:12.48px;line-height:12.48px;color:#404452;letter-spacing:0.062px;">HTTP 2xx</span>
<span style="left:477.93px;top:459.02px;font-size:14.56px;line-height:14.56px;color:#1A1C21;font-weight:700;">IdentityController#getBeneficiariesByPhoneNum</span>
<span style="left:823.22px;top:460.02px;font-size:12.48px;line-height:12.48px;color:#69707D;letter-spacing:0.22px;">30 s</span>
<div style="left:401.3px;top:487px;width:2.2px;height:16px;background:#6092C0;"></div>
<svg style="left:402.2px;top:509px" width="14" height="13" viewBox="0 0 14 13" fill="none" stroke="#343741" stroke-width="1.1"><ellipse cx="6.900" cy="1.850" rx="6.300" ry="1.300"/><path d="M0.600 1.850v9.050a6.300 1.300 0 0 0 12.600 0V1.850"/><path d="M0.600 4.600a6.300 1.300 0 0 0 12.600 0M0.600 7.750a6.300 1.300 0 0 0 12.600 0"/></svg>
<span style="left:424.51px;top:508.02px;font-size:14.56px;line-height:14.56px;color:#343741;-webkit-text-stroke:0.16px;letter-spacing:-0.615px;">EXISTS</span>
<span style="left:481.16px;top:509.02px;font-size:12.48px;line-height:12.48px;color:#69707D;letter-spacing:0.121px;">877 µs</span>
<div style="left:401.3px;top:536px;width:2.2px;height:16px;background:#6092C0;"></div>
<svg style="left:402.2px;top:558px" width="14" height="13" viewBox="0 0 14 13" fill="none" stroke="#343741" stroke-width="1.1"><ellipse cx="6.900" cy="1.850" rx="6.300" ry="1.300"/><path d="M0.600 1.850v9.050a6.300 1.300 0 0 0 12.600 0V1.850"/><path d="M0.600 4.600a6.300 1.300 0 0 0 12.600 0M0.600 7.750a6.300 1.300 0 0 0 12.600 0"/></svg>
<span style="left:424.97px;top:557.02px;font-size:14.56px;line-height:14.56px;color:#343741;-webkit-text-stroke:0.16px;letter-spacing:-1.119px;">GET</span>
<span style="left:460.86px;top:558.02px;font-size:12.48px;line-height:12.48px;color:#69707D;letter-spacing:0.261px;">756 µs</span>
<div style="left:401.3px;top:585px;width:2.2px;height:16px;background:#6092C0;"></div>
<svg style="left:402.2px;top:607px" width="14" height="13" viewBox="0 0 14 13" fill="none" stroke="#343741" stroke-width="1.1"><ellipse cx="6.900" cy="1.850" rx="6.300" ry="1.300"/><path d="M0.600 1.850v9.050a6.300 1.300 0 0 0 12.600 0V1.850"/><path d="M0.600 4.600a6.300 1.300 0 0 0 12.600 0M0.600 7.750a6.300 1.300 0 0 0 12.600 0"/></svg>
<span style="left:425.04px;top:606.02px;font-size:14.56px;line-height:14.56px;color:#343741;-webkit-text-stroke:0.16px;letter-spacing:-0.017px;">SELECT FROM i_beneficiarycontacts</span>
<span style="left:675.52px;top:607.02px;font-size:12.48px;line-height:12.48px;color:#69707D;letter-spacing:-0.207px;">31 ms</span>
<div style="left:403px;top:634px;width:3px;height:16px;background:#6092C0;"></div>
<div style="left:409px;top:634px;width:3px;height:16px;background:#6092C0;"></div>
<div style="left:415px;top:634px;width:3px;height:16px;background:#6092C0;"></div>
<div style="left:421px;top:634px;width:3px;height:16px;background:#6092C0;"></div>
<div style="left:427px;top:634px;width:3px;height:16px;background:#6092C0;"></div>
<div style="left:433px;top:634px;width:3px;height:16px;background:#6092C0;"></div>
<div style="left:439px;top:634px;width:3px;height:16px;background:#6092C0;"></div>
<svg style="left:404.1px;top:656px" width="14" height="13" viewBox="0 0 14 13" fill="none" stroke="#343741" stroke-width="1.1"><ellipse cx="6.900" cy="1.850" rx="6.300" ry="1.300"/><path d="M0.600 1.850v9.050a6.300 1.300 0 0 0 12.600 0V1.850"/><path d="M0.600 4.600a6.300 1.300 0 0 0 12.600 0M0.600 7.750a6.300 1.300 0 0 0 12.600 0"/></svg>
<span style="left:426.49px;top:655.02px;font-size:14.56px;line-height:14.56px;color:#343741;-webkit-text-stroke:0.16px;letter-spacing:-0.108px;">1501x SELECT FROM i_beneficiarymapping</span>
<span style="left:718.25px;top:656.02px;font-size:12.48px;line-height:12.48px;color:#69707D;letter-spacing:-0.012px;">1,293 ms</span>
<div style="left:445.3px;top:683px;width:2.2px;height:16px;background:#6092C0;"></div>
<svg style="left:446.5px;top:705px" width="14" height="13" viewBox="0 0 14 13" fill="none" stroke="#343741" stroke-width="1.1"><ellipse cx="6.900" cy="1.850" rx="6.300" ry="1.300"/><path d="M0.600 1.850v9.050a6.300 1.300 0 0 0 12.600 0V1.850"/><path d="M0.600 4.600a6.300 1.300 0 0 0 12.600 0M0.600 7.750a6.300 1.300 0 0 0 12.600 0"/></svg>
<span style="left:469.04px;top:704.02px;font-size:14.56px;line-height:14.56px;color:#343741;-webkit-text-stroke:0.16px;letter-spacing:-0.079px;">SELECT FROM i_beneficiaryaccount</span>
<span style="left:715.51px;top:705.02px;font-size:12.48px;line-height:12.48px;color:#69707D;letter-spacing:0.35px;">433 µs</span>
<div style="left:445.3px;top:732px;width:2.2px;height:16px;background:#6092C0;"></div>
<svg style="left:446.5px;top:754px" width="14" height="13" viewBox="0 0 14 13" fill="none" stroke="#343741" stroke-width="1.1"><ellipse cx="6.900" cy="1.850" rx="6.300" ry="1.300"/><path d="M0.600 1.850v9.050a6.300 1.300 0 0 0 12.600 0V1.850"/><path d="M0.600 4.600a6.300 1.300 0 0 0 12.600 0M0.600 7.750a6.300 1.300 0 0 0 12.600 0"/></svg>
<span style="left:469.04px;top:753.02px;font-size:14.56px;line-height:14.56px;color:#343741;-webkit-text-stroke:0.16px;letter-spacing:-0.13px;">SELECT FROM i_beneficiaryimage</span>
<span style="left:702.11px;top:754.02px;font-size:12.48px;line-height:12.48px;color:#69707D;letter-spacing:0.45px;">440 µs</span>
<div style="left:445.3px;top:781px;width:2.2px;height:16px;background:#6092C0;"></div>
<svg style="left:446.5px;top:803px" width="14" height="13" viewBox="0 0 14 13" fill="none" stroke="#343741" stroke-width="1.1"><ellipse cx="6.900" cy="1.850" rx="6.300" ry="1.300"/><path d="M0.600 1.850v9.050a6.300 1.300 0 0 0 12.600 0V1.850"/><path d="M0.600 4.600a6.300 1.300 0 0 0 12.600 0M0.600 7.750a6.300 1.300 0 0 0 12.600 0"/></svg>
<span style="left:469.04px;top:802.02px;font-size:14.56px;line-height:14.56px;color:#343741;-webkit-text-stroke:0.16px;letter-spacing:-0.091px;">SELECT FROM i_beneficiaryaddress</span>
<span style="left:714.67px;top:803.02px;font-size:12.48px;line-height:12.48px;color:#69707D;letter-spacing:0.331px;">22 ms</span>
<div style="left:450px;top:830px;width:2.2px;height:16px;background:#6092C0;"></div>
<svg style="left:451.29999999999995px;top:852px" width="14" height="13" viewBox="0 0 14 13" fill="none" stroke="#343741" stroke-width="1.1"><ellipse cx="6.900" cy="1.850" rx="6.300" ry="1.300"/><path d="M0.600 1.850v9.050a6.300 1.300 0 0 0 12.600 0V1.850"/><path d="M0.600 4.600a6.300 1.300 0 0 0 12.600 0M0.600 7.750a6.300 1.300 0 0 0 12.600 0"/></svg>
<span style="left:473.54px;top:851.02px;font-size:14.56px;line-height:14.56px;color:#343741;-webkit-text-stroke:0.16px;letter-spacing:-0.089px;">SELECT FROM i_beneficiaryconsent</span>
<span style="left:719.05px;top:852.02px;font-size:12.48px;line-height:12.48px;color:#69707D;letter-spacing:-0.213px;">15 ms</span>
<div style="left:451.7px;top:879px;width:2.2px;height:16px;background:#6092C0;"></div>
<svg style="left:453.2px;top:901px" width="14" height="13" viewBox="0 0 14 13" fill="none" stroke="#343741" stroke-width="1.1"><ellipse cx="6.900" cy="1.850" rx="6.300" ry="1.300"/><path d="M0.600 1.850v9.050a6.300 1.300 0 0 0 12.600 0V1.850"/><path d="M0.600 4.600a6.300 1.300 0 0 0 12.600 0M0.600 7.750a6.300 1.300 0 0 0 12.600 0"/></svg>
<span style="left:475.44px;top:900.02px;font-size:14.56px;line-height:14.56px;color:#343741;-webkit-text-stroke:0.16px;letter-spacing:-0.075px;">SELECT FROM i_beneficiarydetails</span>
<span style="left:711.45px;top:901.02px;font-size:12.48px;line-height:12.48px;color:#69707D;letter-spacing:-0.138px;">12 ms</span>
<div style="left:451.7px;top:928px;width:2.2px;height:16px;background:#6092C0;"></div>
<svg style="left:453.2px;top:950px" width="14" height="13" viewBox="0 0 14 13" fill="none" stroke="#343741" stroke-width="1.1"><ellipse cx="6.900" cy="1.850" rx="6.300" ry="1.300"/><path d="M0.600 1.850v9.050a6.300 1.300 0 0 0 12.600 0V1.850"/><path d="M0.600 4.600a6.300 1.300 0 0 0 12.600 0M0.600 7.750a6.300 1.300 0 0 0 12.600 0"/></svg>
<span style="left:476.04px;top:949.02px;font-size:14.56px;line-height:14.56px;color:#343741;-webkit-text-stroke:0.16px;letter-spacing:-0.111px;">SELECT FROM i_beneficiaryaddress</span>
<span style="left:721.36px;top:950.02px;font-size:12.48px;line-height:12.48px;color:#69707D;letter-spacing:0.141px;">777 µs</span>
<div style="left:451.7px;top:977px;width:2.2px;height:16px;background:#6092C0;"></div>
<svg style="left:453.2px;top:999px" width="14" height="13" viewBox="0 0 14 13" fill="none" stroke="#343741" stroke-width="1.1"><ellipse cx="6.900" cy="1.850" rx="6.300" ry="1.300"/><path d="M0.600 1.850v9.050a6.300 1.300 0 0 0 12.600 0V1.850"/><path d="M0.600 4.600a6.300 1.300 0 0 0 12.600 0M0.600 7.750a6.300 1.300 0 0 0 12.600 0"/></svg>
<span style="left:476.04px;top:998.02px;font-size:14.56px;line-height:14.56px;color:#343741;-webkit-text-stroke:0.16px;letter-spacing:-0.098px;">SELECT FROM i_beneficiaryconsent</span>
<span style="left:721.87px;top:999.02px;font-size:12.48px;line-height:12.48px;color:#69707D;letter-spacing:-0.175px;">611 µs</span>
<div style="left:0;top:0;width:9px;height:1011px;overflow:hidden;background:#4C4C4C;border-right:1px solid #3F3F3F;">
<div style="left:0px;top:5px;width:9px;height:1px;background:#434343;"></div>
<div style="left:0px;top:12px;width:9px;height:1px;background:#434343;"></div>
<div style="left:0px;top:117px;width:5px;height:45px;background:#595959;border-radius:0 4px 4px 0;"></div>
<span style="right:0.5px;top:27px;font-size:14px;line-height:14px;color:#3A3A3A;">e</span>
<span style="right:0.5px;top:65px;font-size:14px;line-height:14px;color:#3A3A3A;">rr</span>
<span style="right:0.5px;top:102px;font-size:14px;line-height:14px;color:#3A3A3A;">m</span>
<span style="right:0.5px;top:139px;font-size:14px;line-height:14px;color:#3A3A3A;">cu</span>
<span style="right:0.5px;top:173px;font-size:14px;line-height:14px;color:#3A3A3A;">vi</span>
<span style="right:0.5px;top:217px;font-size:14px;line-height:14px;color:#3A3A3A;">si</span>
<span style="right:0.5px;top:254px;font-size:14px;line-height:14px;color:#3A3A3A;">cu</span>
<span style="right:0.5px;top:292px;font-size:14px;line-height:14px;color:#3A3A3A;">e</span>
<span style="right:0.5px;top:329px;font-size:14px;line-height:14px;color:#3A3A3A;">sh</span>
<span style="right:0.5px;top:378px;font-size:14px;line-height:14px;color:#3A3A3A;">h</span>
<span style="right:0.5px;top:424px;font-size:14px;line-height:14px;color:#3A3A3A;">-</span>
<span style="right:0.5px;top:470px;font-size:14px;line-height:14px;color:#3A3A3A;">e</span>
</div>
</div>
</body>
</html>
